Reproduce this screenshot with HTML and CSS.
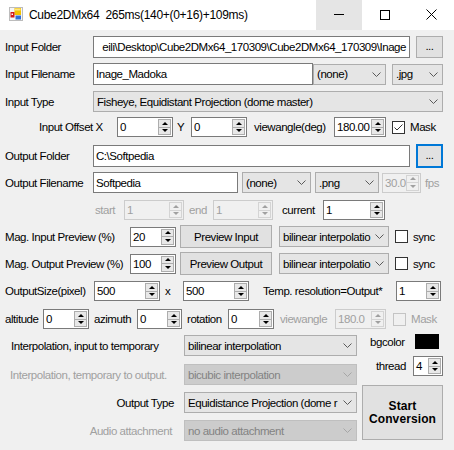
FILE: index.html
```html
<!DOCTYPE html>
<html>
<head>
<meta charset="utf-8">
<title>Cube2DMx64</title>
<link rel="stylesheet" href="styles.css">
</head>
<body>
<div class="win">
  <header class="titlebar">
    <svg class="appicon" width="14" height="14" viewBox="0 0 14 14">
      <rect x="0.5" y="0.5" width="13" height="13" fill="#f6f6f6" stroke="#bcbcbc"/>
      <rect x="5.5" y="1" width="6.5" height="7" fill="#f2c200"/>
      <rect x="6" y="1.5" width="5.5" height="2" fill="#ffe680"/>
      <rect x="1.5" y="5" width="4" height="5.5" fill="#d21a1a"/>
      <rect x="2.5" y="6.5" width="1.5" height="1.5" fill="#ffffff"/>
      <rect x="6.5" y="8.5" width="5.5" height="4" fill="#2f6fd6"/>
    </svg>
    <span class="title">Cube2DMx64&nbsp; 265ms(140+(0+16)+109ms)</span>
    <div class="caps">
      <span class="cap cap-min"><svg width="10" height="10" viewBox="0 0 10 10"><path d="M0 4.5H10" stroke="#000" fill="none"/></svg></span>
      <span class="cap"><svg width="10" height="10" viewBox="0 0 10 10"><rect x="0.5" y="0.5" width="9" height="9" fill="none" stroke="#000"/></svg></span>
      <span class="cap"><svg width="11" height="11" viewBox="0 0 11 11"><path d="M0.5 0.5L10.5 10.5M10.5 0.5L0.5 10.5" stroke="#000" fill="none"/></svg></span>
    </div>
  </header>

  <main class="form">
    <div class="row r1">
      <span class="lbl ml5 w88">Input Folder</span>
      <div class="tb w317 tail"><span>eili\Desktop\Cube2DMx64_170309\Cube2DMx64_170309\Inage</span></div>
      <div class="btn ml6 w27 dots">...</div>
    </div>

    <div class="row r2">
      <span class="lbl ml5 w88">Input Filename</span>
      <div class="tb w220"><span>Inage_Madoka</span></div>
      <div class="combo w73"><span class="ct">(none)</span><svg class="chev" width="9" height="5" viewBox="0 0 9 5"><path d="M0.5 0.5L4.5 4.5L8.5 0.5"/></svg></div>
      <div class="combo ml6 w51"><span class="ct">.jpg</span><svg class="chev" width="9" height="5" viewBox="0 0 9 5"><path d="M0.5 0.5L4.5 4.5L8.5 0.5"/></svg></div>
    </div>

    <div class="row r3">
      <span class="lbl ml5 w88">Input Type</span>
      <div class="combo w350"><span class="ct">Fisheye, Equidistant Projection (dome master)</span><svg class="chev" width="9" height="5" viewBox="0 0 9 5"><path d="M0.5 0.5L4.5 4.5L8.5 0.5"/></svg></div>
    </div>

    <div class="row r4">
      <span class="lbl ml39 w78">Input Offset X</span>
      <div class="num w56"><span class="v">0</span><span class="spin"><i class="up"></i><i class="dn"></i></span></div>
      <span class="lbl ml4 w14">Y</span>
      <div class="num w56"><span class="v">0</span><span class="spin"><i class="up"></i><i class="dn"></i></span></div>
      <span class="lbl ml7 w80">viewangle(deg)</span>
      <div class="num w52"><span class="v">180.00</span><span class="spin"><i class="up"></i><i class="dn"></i></span></div>
      <span class="chk ml6"><svg width="11" height="11" viewBox="0 0 11 11"><path d="M1.5 5.5L4 8L9.5 2.5" fill="none" stroke="#333"/></svg></span>
      <span class="lbl ml5">Mask</span>
    </div>

    <div class="row r5">
      <span class="lbl ml5 w88">Output Folder</span>
      <div class="tb w317"><span>C:\Softpedia</span></div>
      <div class="btn focus ml6 w27 dots">...</div>
    </div>

    <div class="row r6">
      <span class="lbl ml5 w88">Output Filename</span>
      <div class="tb w145"><span>Softpedia</span></div>
      <div class="combo ml4 w69"><span class="ct">(none)</span><svg class="chev" width="9" height="5" viewBox="0 0 9 5"><path d="M0.5 0.5L4.5 4.5L8.5 0.5"/></svg></div>
      <div class="combo ml4 w64"><span class="ct">.png</span><svg class="chev" width="9" height="5" viewBox="0 0 9 5"><path d="M0.5 0.5L4.5 4.5L8.5 0.5"/></svg></div>
      <div class="num off ml3 w39"><span class="v">30.0</span><span class="spin"><i class="up"></i><i class="dn"></i></span></div>
      <span class="lbl dis ml4">fps</span>
    </div>

    <div class="row r7">
      <span class="lbl dis ml95 w29">start</span>
      <div class="num off w60"><span class="v">1</span><span class="spin"><i class="up"></i><i class="dn"></i></span></div>
      <span class="lbl dis ml5 w24">end</span>
      <div class="num off w60"><span class="v">1</span><span class="spin"><i class="up"></i><i class="dn"></i></span></div>
      <span class="lbl ml9 w41">current</span>
      <div class="num w62"><span class="v">1</span><span class="spin"><i class="up"></i><i class="dn"></i></span></div>
    </div>

    <div class="row r8">
      <span class="lbl ml5 w125">Mag. Input Preview (%)</span>
      <div class="num w46"><span class="v">20</span><span class="spin"><i class="up"></i><i class="dn"></i></span></div>
      <div class="btn ml4 w92">Preview Input</div>
      <div class="combo ml7 w110"><span class="ct">bilinear interpolatio</span><svg class="chev" width="9" height="5" viewBox="0 0 9 5"><path d="M0.5 0.5L4.5 4.5L8.5 0.5"/></svg></div>
      <span class="chk ml6"></span>
      <span class="lbl ml5">sync</span>
    </div>

    <div class="row r9">
      <span class="lbl ml5 w125">Mag. Output Preview (%)</span>
      <div class="num w46"><span class="v">100</span><span class="spin"><i class="up"></i><i class="dn"></i></span></div>
      <div class="btn ml4 w92">Preview Output</div>
      <div class="combo ml7 w110"><span class="ct">bilinear interpolatio</span><svg class="chev" width="9" height="5" viewBox="0 0 9 5"><path d="M0.5 0.5L4.5 4.5L8.5 0.5"/></svg></div>
      <span class="chk ml6"></span>
      <span class="lbl ml5">sync</span>
    </div>

    <div class="row r10">
      <span class="lbl ml5 w89">OutputSize(pixel)</span>
      <div class="num w66"><span class="v">500</span><span class="spin"><i class="up"></i><i class="dn"></i></span></div>
      <span class="lbl ml5 w18">x</span>
      <div class="num w66"><span class="v">500</span><span class="spin"><i class="up"></i><i class="dn"></i></span></div>
      <span class="lbl ml14 w133">Temp. resolution=Output*</span>
      <div class="num w45"><span class="v">1</span><span class="spin"><i class="up"></i><i class="dn"></i></span></div>
    </div>

    <div class="row r11">
      <span class="lbl ml5 w38">altitude</span>
      <div class="num w46"><span class="v">0</span><span class="spin"><i class="up"></i><i class="dn"></i></span></div>
      <span class="lbl ml5 w43">azimuth</span>
      <div class="num w45"><span class="v">0</span><span class="spin"><i class="up"></i><i class="dn"></i></span></div>
      <span class="lbl ml5 w41">rotation</span>
      <div class="num w46"><span class="v">0</span><span class="spin"><i class="up"></i><i class="dn"></i></span></div>
      <span class="lbl dis ml6 w55">viewangle</span>
      <div class="num off w51"><span class="v">180.0</span><span class="spin"><i class="up"></i><i class="dn"></i></span></div>
      <span class="chk off ml7"></span>
      <span class="lbl dis ml5">Mask</span>
    </div>

    <div class="bottom">
      <div class="bl">
        <div class="brow b12">
          <span class="lbl ml11 w173">Interpolation, input to temporary</span>
          <div class="combo w173"><span class="ct">bilinear interpolation</span><svg class="chev" width="9" height="5" viewBox="0 0 9 5"><path d="M0.5 0.5L4.5 4.5L8.5 0.5"/></svg></div>
        </div>
        <div class="brow b13">
          <span class="lbl dis ml10 w174">Interpolation, temporary to output.</span>
          <div class="combo off w173"><span class="ct">bicubic interpolation</span><svg class="chev" width="9" height="5" viewBox="0 0 9 5"><path d="M0.5 0.5L4.5 4.5L8.5 0.5"/></svg></div>
        </div>
        <div class="brow b14">
          <span class="lbl rt w184">Output Type</span>
          <div class="combo w173"><span class="ct">Equidistance Projection (dome r</span><svg class="chev" width="9" height="5" viewBox="0 0 9 5"><path d="M0.5 0.5L4.5 4.5L8.5 0.5"/></svg></div>
        </div>
        <div class="brow b15">
          <span class="lbl dis rt2 w184">Audio attachment</span>
          <div class="combo off w173"><span class="ct">no audio attachment</span><svg class="chev" width="9" height="5" viewBox="0 0 9 5"><path d="M0.5 0.5L4.5 4.5L8.5 0.5"/></svg></div>
        </div>
      </div>
      <div class="br">
        <div class="bgrow">
          <span class="lbl ml8">bgcolor</span>
          <span class="swatch"></span>
        </div>
        <div class="thrrow">
          <span class="lbl ml14">thread</span>
          <div class="num w30 push"><span class="v">4</span><span class="spin"><i class="up"></i><i class="dn"></i></span></div>
        </div>
        <div class="btn start">Start<br>Conversion</div>
      </div>
    </div>
  </main>
</div>
</body>
</html>
```

FILE: styles.css
```css
* { box-sizing: border-box; }

body {
  margin: 0;
  background: #f0f0f0;
  font-family: "Liberation Sans", Arial, sans-serif;
  font-size: 11.5px;
  letter-spacing: -0.45px;
  color: #000;
}

.win {
  width: 454px;
  height: 450px;
  overflow: hidden;
  background: #f0f0f0;
}

/* title bar */
.titlebar {
  height: 30px;
  background: #fff;
  display: flex;
  align-items: center;
}
.appicon { margin-left: 9px; align-self: flex-start; margin-top: 7px; flex-shrink: 0; }
.title {
  margin-left: 6px;
  font-size: 12px;
  letter-spacing: -0.3px;
  white-space: nowrap;
}
.caps { margin-left: auto; display: flex; height: 30px; }
.cap {
  width: 46px;
  height: 30px;
  display: flex;
  align-items: center;
  justify-content: center;
  padding-bottom: 1px;
}
.cap-min { background: #e5e5e5; }

/* rows */
.row { display: flex; align-items: center; }
.r1 { margin-top: 6px; height: 22px; }
.r2 { margin-top: 5px; height: 22px; }
.r3 { margin-top: 6px; height: 21px; }
.r4 { margin-top: 5px; height: 20px; }
.r5 { margin-top: 8px; height: 22px; }
.r6 { margin-top: 5px; height: 21px; }
.r7 { margin-top: 7px; height: 20px; }
.r8 { margin-top: 5px; height: 23px; }
.r9 { margin-top: 4px; height: 23px; }
.r10 { margin-top: 6px; height: 20px; }
.r11 { margin-top: 8px; height: 20px; }

.lbl { flex-shrink: 0; white-space: nowrap; }
.dis { color: #a0a0a0; }
.rt { text-align: right; padding-right: 10px; }
.rt2 { text-align: right; padding-right: 12px; }

/* text box */
.tb {
  height: 22px;
  border: 1px solid #7a7a7a;
  background: #fff;
  padding: 0 3px 0 2px;
  display: flex;
  align-items: center;
  overflow: hidden;
  white-space: nowrap;
  flex-shrink: 0;
}
.tb span { flex-shrink: 0; }
.tb.tail { justify-content: flex-end; }
.r6 .tb { height: 21px; }

/* combo */
.combo {
  height: 21px;
  border: 1px solid #adadad;
  background: #e5e5e5;
  display: flex;
  align-items: center;
  padding-left: 3px;
  flex-shrink: 0;
  overflow: hidden;
}
.combo .ct { flex: 1; overflow: hidden; white-space: nowrap; }
.chev { flex-shrink: 0; margin: 0 4px 0 3px; }
.chev path { fill: none; stroke: #5a5a5a; }
.combo.off { background: #cccccc; border-color: #bfbfbf; color: #838383; }
.combo.off .chev path { stroke: #a6a6a6; }

/* numeric up-down */
.num {
  height: 20px;
  border: 1px solid #7a7a7a;
  background: #fff;
  display: flex;
  flex-shrink: 0;
}
.num .v { flex: 1; padding-left: 2px; line-height: 18px; overflow: hidden; white-space: nowrap; }
.spin {
  width: 13px;
  margin: 1px 1px 1px 0;
  display: flex;
  flex-direction: column;
  flex-shrink: 0;
}
.spin i {
  flex: 1;
  border: 1px solid #adadad;
  background: #e8e8e8;
  display: flex;
  align-items: center;
  justify-content: center;
}
.spin i + i { border-top: 0; }
.spin .up::after {
  content: "";
  border-left: 3px solid transparent;
  border-right: 3px solid transparent;
  border-bottom: 3px solid #000;
}
.spin .dn::after {
  content: "";
  border-left: 3px solid transparent;
  border-right: 3px solid transparent;
  border-top: 3px solid #000;
}
.num.off { border-color: #cccccc; background: #f0f0f0; color: #a0a0a0; }
.num.off .spin i { border-color: #d4d4d4; background: #f0f0f0; }
.num.off .spin .up::after { border-bottom-color: #a0a0a0; }
.num.off .spin .dn::after { border-top-color: #a0a0a0; }

/* buttons */
.btn {
  height: 23px;
  border: 1px solid #adadad;
  background: #e1e1e1;
  display: flex;
  align-items: center;
  justify-content: center;
  white-space: nowrap;
  flex-shrink: 0;
}
.btn.dots { height: 22px; padding-bottom: 2px; }
.btn.focus { border: 2px solid #0078d7; height: 24px; }

/* checkbox */
.chk {
  width: 13px;
  height: 13px;
  border: 1px solid #333;
  background: #fff;
  flex-shrink: 0;
  display: flex;
}
.chk.off { border-color: #c4c4c4; background: #f0f0f0; }

/* bottom section */
.bottom { display: flex; align-items: flex-start; margin-top: 5px; }
.bl { width: 356px; flex-shrink: 0; }
.brow { display: flex; align-items: center; height: 21px; }
.b12 { margin-top: 1px; }
.b13 { margin-top: 8px; }
.b14 { margin-top: 7px; }
.b15 { margin-top: 7px; }

.br { width: 81px; margin-left: 6px; display: flex; flex-direction: column; }
.bgrow { display: flex; align-items: center; height: 15px; }
.swatch { width: 24px; height: 15px; background: #000; margin-left: auto; margin-right: 4px; }
.thrrow { display: flex; align-items: center; height: 20px; margin-top: 7px; }
.push { margin-left: auto; }
.start {
  margin-top: 9px;
  width: 81px;
  height: 55px;
  font-weight: bold;
  font-size: 12px;
  letter-spacing: 0.1px;
  line-height: 13px;
  text-align: center;
  white-space: normal;
}

/* spacing helpers */
.ml3 { margin-left: 3px; }
.ml4 { margin-left: 4px; }
.ml5 { margin-left: 5px; }
.ml6 { margin-left: 6px; }
.ml7 { margin-left: 7px; }
.ml8 { margin-left: 8px; }
.ml9 { margin-left: 9px; }
.ml10 { margin-left: 10px; }
.ml11 { margin-left: 11px; }
.ml14 { margin-left: 14px; }
.ml39 { margin-left: 39px; }
.ml95 { margin-left: 95px; }

.w14 { width: 14px; }
.w18 { width: 18px; }
.w24 { width: 24px; }
.w27 { width: 27px; }
.w29 { width: 29px; }
.w30 { width: 30px; }
.w38 { width: 38px; }
.w39 { width: 39px; }
.w41 { width: 41px; }
.w43 { width: 43px; }
.w45 { width: 45px; }
.w46 { width: 46px; }
.w51 { width: 51px; }
.w52 { width: 52px; }
.w55 { width: 55px; }
.w56 { width: 56px; }
.w60 { width: 60px; }
.w62 { width: 62px; }
.w64 { width: 64px; }
.w66 { width: 66px; }
.w69 { width: 69px; }
.w73 { width: 73px; }
.w78 { width: 78px; }
.w80 { width: 80px; }
.w88 { width: 88px; }
.w89 { width: 89px; }
.w92 { width: 92px; }
.w110 { width: 110px; }
.w125 { width: 125px; }
.w133 { width: 133px; }
.w145 { width: 145px; }
.w173 { width: 173px; }
.w174 { width: 174px; }
.w184 { width: 184px; }
.w220 { width: 220px; }
.w317 { width: 317px; }
.w350 { width: 350px; }
```
